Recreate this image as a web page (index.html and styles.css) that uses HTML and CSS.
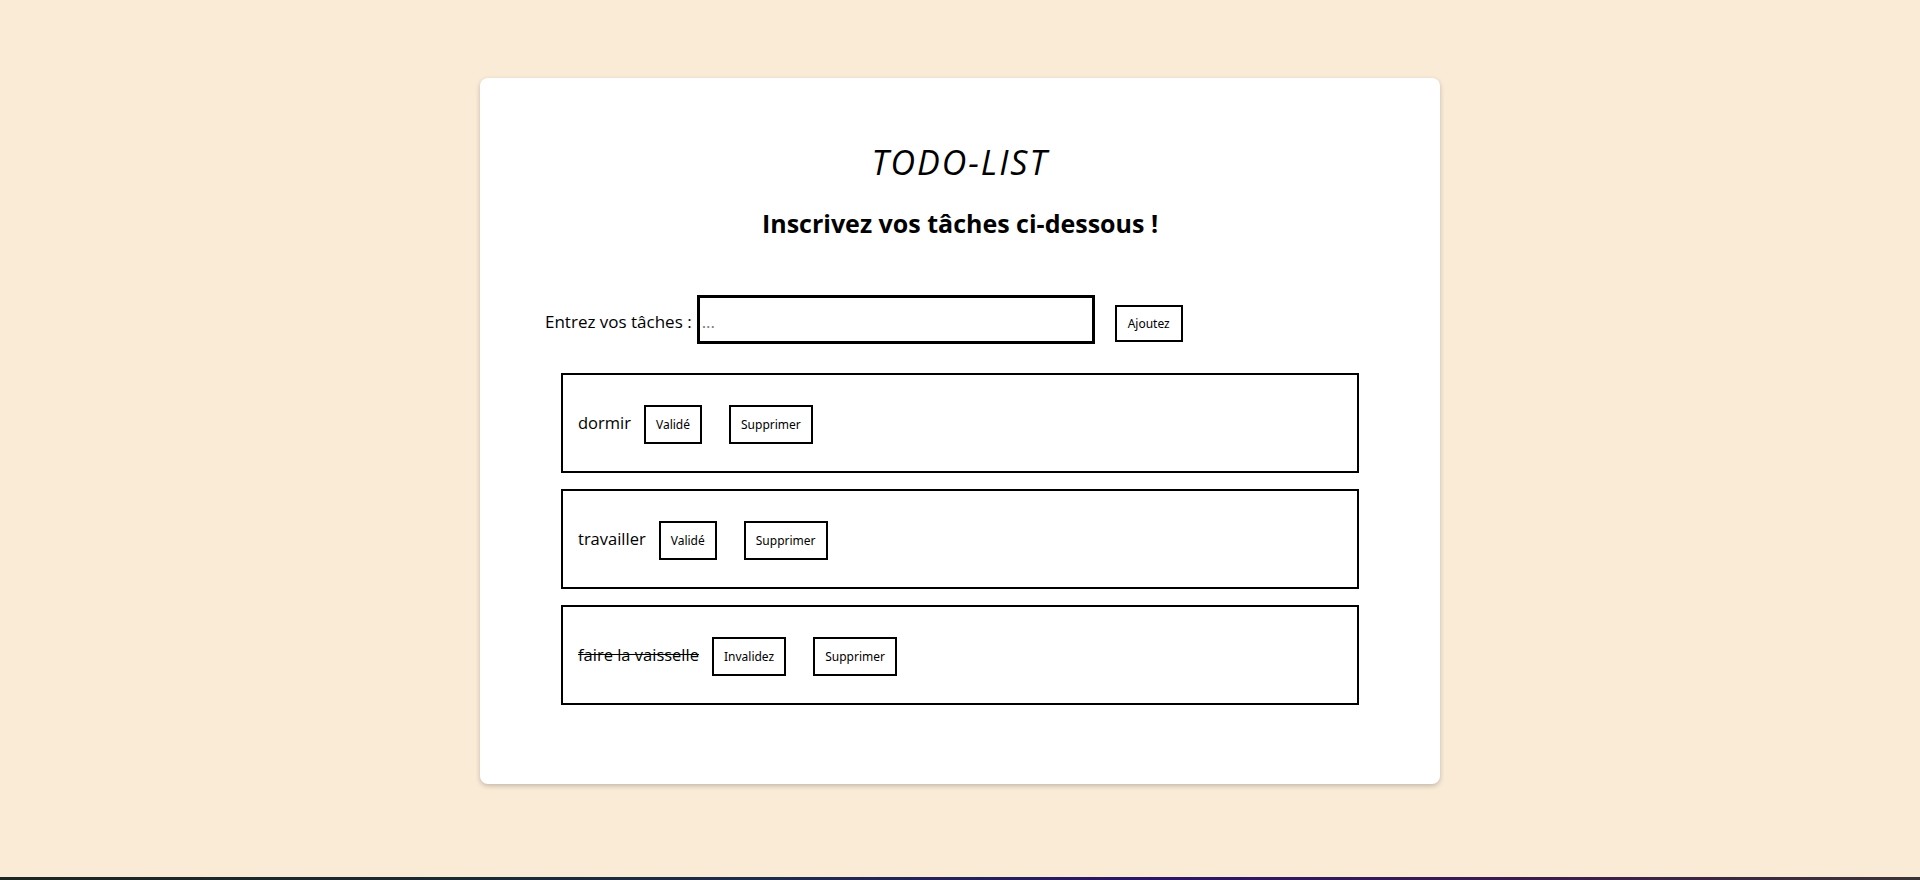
FILE: index.html
```html
<!DOCTYPE html>
<html lang="fr">
<head>
<meta charset="utf-8">
<title>TODO-LIST</title>
<link rel="stylesheet" href="styles.css">
</head>
<body>
<div class="page">
  <main class="card">
    <h1 class="title">TODO-LIST</h1>
    <h2 class="subtitle">Inscrivez vos tâches ci-dessous !</h2>
    <form class="entry">
      <label class="entry-label" for="task">Entrez vos tâches :</label>
      <input class="entry-input" id="task" type="text" placeholder="...">
      <button class="btn btn-add" type="button">Ajoutez</button>
    </form>
    <ul class="tasks">
      <li class="task">
        <div class="task-line">
          <span class="task-name">dormir</span>
          <button class="btn btn-toggle" type="button">Validé</button>
          <button class="btn btn-delete" type="button">Supprimer</button>
        </div>
      </li>
      <li class="task">
        <div class="task-line">
          <span class="task-name">travailler</span>
          <button class="btn btn-toggle" type="button">Validé</button>
          <button class="btn btn-delete" type="button">Supprimer</button>
        </div>
      </li>
      <li class="task">
        <div class="task-line">
          <span class="task-name task-done">faire la vaisselle</span>
          <button class="btn btn-toggle" type="button">Invalidez</button>
          <button class="btn btn-delete" type="button">Supprimer</button>
        </div>
      </li>
    </ul>
  </main>
  <div class="bottom-strip"></div>
</div>
</body>
</html>
```

FILE: styles.css
```css
* {
  box-sizing: border-box;
}

html, body {
  margin: 0;
  padding: 0;
}

body {
  background: #faebd7;
  font-family: "Open Sans", "Noto Sans", sans-serif;
  color: #000;
}

.page {
  height: 880px;
  display: flex;
  flex-direction: column;
  align-items: center;
  padding-top: 78px;
}

.card {
  width: 960px;
  height: 706px;
  background: #fff;
  border-radius: 8px;
  box-shadow: 0 2px 5px rgba(0, 0, 0, 0.22);
  padding: 61px 81px 0 81px;
  display: flex;
  flex-direction: column;
}

.title {
  margin: 0;
  text-align: center;
  font-family: "Open Sans", sans-serif;
  font-style: italic;
  font-weight: 400;
  font-size: 34px;
  letter-spacing: 2px;
}

.subtitle {
  margin: 21px 0 0 0;
  text-align: center;
  font-family: "Open Sans", sans-serif;
  font-weight: 700;
  font-size: 25px;
}

.entry {
  margin: 55px 0 0 -16px;
  display: flex;
  align-items: baseline;
}

.entry-label {
  font-size: 17px;
  margin-right: 5px;
}

.entry-input {
  width: 398px;
  height: 49px;
  border: 3px solid #000;
  border-radius: 0;
  padding: 4px 2px 0 2px;
  font-family: "Open Sans", sans-serif;
  font-size: 17px;
  outline: none;
}

.entry-input::placeholder {
  color: #777;
}

.btn {
  background: #fff;
  border: 2px solid #000;
  border-radius: 0;
  font-family: "Noto Sans", sans-serif;
  font-size: 12px;
  color: #000;
  line-height: normal;
  padding: 9px 10px;
}

.btn-add {
  margin-left: 20px;
  padding: 8px 11px;
}

.tasks {
  list-style: none;
  margin: 29px 0 0 0;
  padding: 0;
  display: flex;
  flex-direction: column;
  gap: 16px;
}

.task {
  height: 100px;
  border: 2px solid #000;
  padding: 2px 15px 0 15px;
  display: flex;
  align-items: center;
}

.task-line {
  display: flex;
  align-items: baseline;
}

.task-name {
  font-size: 16.5px;
}

.task-done {
  text-decoration: line-through;
}

.btn-toggle {
  margin-left: 13px;
}

.btn-delete {
  margin-left: 27px;
}

.bottom-strip {
  margin-top: auto;
  width: 100%;
  height: 3px;
  background: linear-gradient(90deg, #1d2620 0%, #1a2a34 25%, #1c2c4e 40%, #2b1568 60%, #3a1c4e 80%, #3b3436 100%);
}
```
